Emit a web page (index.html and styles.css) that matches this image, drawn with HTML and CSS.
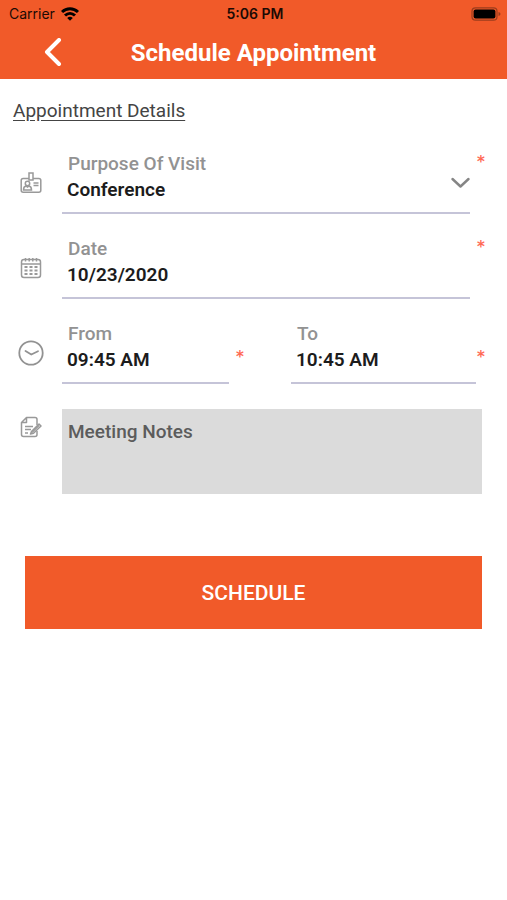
FILE: index.html
```
<!DOCTYPE html>
<html lang="en">
<head>
    <meta charset="UTF-8">
    <meta name="viewport" content="width=device-width, initial-scale=1.0">
    <title>Schedule Appointment</title>
    <link rel="stylesheet" href="styles.css">
</head>
<body>
    <header>
        <div class="status-bar">
            <div class="carrier">
                <span>Carrier</span>
                <svg width="18" height="14" viewBox="0 0 18 14" fill="none" stroke="#000" stroke-width="3">
                    <path d="M1 5C5.500 .5 12.5 .5 17 5"/>
                    <path d="M4 8.5C7 5.700 11 5.700 14 8.5"/>
                    <path d="M6.2 10.9Q9 8.5 11.8 10.9L9 13.8z" fill="#000" stroke="none"/>
                </svg>
            </div>
            <div class="time">5:06 PM</div>
            <div class="battery">
                <svg width="30" height="14" viewBox="0 0 30 14">
                    <rect x="1" y="0.8" width="25" height="12.4" rx="3.5" fill="none" stroke="#9b3d1d" stroke-width="1.2"/>
                    <rect x="2.6" y="2.5" width="21.8" height="9" rx="2" fill="#000"/>
                    <path d="M27.5 5v4q2-.6 2-2t-2-2z" fill="#9b3d1d"/>
                </svg>
            </div>
        </div>
        <div class="nav-bar">
            <button class="back" aria-label="Back">
                <svg width="18" height="30" viewBox="0 0 18 30" fill="none" stroke="#fff" stroke-width="4" stroke-linecap="round" stroke-linejoin="round">
                    <path d="M15 2L3 14l12 12"/>
                </svg>
            </button>
            <h1>Schedule Appointment</h1>
        </div>
    </header>

    <main>
        <h2>Appointment Details</h2>
        <form>
            <div class="row">
                <div class="icon">
                    <svg width="22" height="22" viewBox="0 0 22 22" fill="none" stroke="#999" stroke-width="1.5">
                        <path d="M9 6.5H3.2Q1.2 6.5 1.2 8.5v9.8q0 2 2 2h15.6q2 0 2-2V8.5q0-2-2-2H13"/>
                        <rect x="9" y="1" width="4" height="7"/>
                        <circle cx="7.5" cy="11.5" r="2.2"/>
                        <path d="M3.5 18q0-3.6 2.7-3.9l1.3 1 1.3-1q2.7.3 2.7 3.9zM13.5 11h5M13.5 13.5h5"/>
                    </svg>
                </div>
                <div class="field">
                    <label for="purpose">Purpose Of Visit</label>
                    <select id="purpose">
                        <option>Conference</option>
                    </select>
                    <svg class="chevron" width="20" height="12" viewBox="0 0 20 12" fill="none" stroke="#858585" stroke-width="2.4" stroke-linecap="round" stroke-linejoin="round">
                        <path d="M2.5 2l8 7.5 8-7.5"/>
                    </svg>
                </div>
                <span class="required">*</span>
            </div>

            <div class="row">
                <div class="icon">
                    <svg width="22" height="22" viewBox="0 0 22 22" fill="none" stroke="#999" stroke-width="1.5">
                        <rect x="1.5" y="2.5" width="19" height="18" rx="2.5"/>
                        <path d="M1.5 7h19M5.5 1v3.5M9.2 1v3.5M12.8 1v3.5M16.5 1v3.5"/>
                        <path d="M4.5 10h3M9.5 10h3M14.5 10h3M4.5 13.5h3M9.5 13.5h3M14.5 13.5h3M4.5 17h3M9.5 17h3M14.5 17h3" stroke-width="2"/>
                    </svg>
                </div>
                <div class="field">
                    <label for="date">Date</label>
                    <input type="text" id="date" value="10/23/2020">
                </div>
                <span class="required">*</span>
            </div>

            <div class="row times">
                <div class="icon">
                    <svg width="26" height="26" viewBox="0 0 26 26" fill="none" stroke="#929292" stroke-width="1.8" stroke-linecap="round" stroke-linejoin="round">
                        <circle cx="13" cy="13" r="11.7"/>
                        <path d="M7.5 11l5.8 3.5 6.7-3.3"/>
                    </svg>
                </div>
                <div class="field">
                    <label for="from">From</label>
                    <input type="text" id="from" value="09:45 AM">
                </div>
                <span class="required">*</span>
                <div class="field">
                    <label for="to">To</label>
                    <input type="text" id="to" value="10:45 AM">
                </div>
                <span class="required">*</span>
            </div>

            <div class="row notes">
                <div class="icon">
                    <svg width="22" height="22" viewBox="0 0 22 22" fill="none" stroke="#999" stroke-width="1.5" stroke-linejoin="round">
                        <path d="M17 9V3.5q0-2-2-2H6.5L1.5 6.5v12q0 2 2 2H15q2 0 2-2V15M6.5 1.5v5h-5"/>
                        <path d="M5 10.5h8M5 13.5h6M5 17h3"/>
                        <path d="M11.5 15.5L19 8l2 2-7.5 7.3-3 .7z"/>
                        <path d="M12 16.5l7-7"/>
                    </svg>
                </div>
                <textarea placeholder="Meeting Notes" aria-label="Meeting Notes"></textarea>
            </div>

            <button type="button" class="schedule">SCHEDULE</button>
        </form>
    </main>
</body>
</html>
```
FILE: styles.css
```
* {
    margin: 0;
    padding: 0;
    box-sizing: border-box;
}

body {
    background: #fff;
    font-family: Roboto, sans-serif;
}

header {
    background: #f15a29;
}

.status-bar {
    display: grid;
    grid-template-columns: 1fr auto 1fr;
    align-items: center;
    height: 27px;
    padding: 0 6px 0 9px;
    font-family: Inter, sans-serif;
    font-size: 14px;
    color: #1c0a04;
}

.carrier {
    display: flex;
    align-items: center;
    gap: 6px;
}

.time {
    font-weight: 600;
}

.battery {
    display: flex;
    justify-content: flex-end;
}

.nav-bar {
    display: grid;
    grid-template-columns: 62px 1fr 62px;
    align-items: center;
    height: 52px;
}

.back {
    display: flex;
    justify-content: flex-end;
    border: none;
    background: none;
    cursor: pointer;
}

h1 {
    font-size: 24px;
    font-weight: 700;
    text-align: center;
    color: #fff;
}

h2 {
    padding: 20px 13px 0;
    font-size: 19px;
    font-weight: 400;
    line-height: 24px;
    text-decoration: underline;
    text-underline-offset: 3px;
    color: #444;
}

form {
    padding-top: 28px;
}

.row {
    display: grid;
    grid-template-columns: 62px 1fr 37px;
    margin-bottom: 22px;
}

.times {
    grid-template-columns: 62px 167fr 62px 185fr 31px;
}

.icon {
    display: flex;
    justify-content: center;
    align-items: center;
}

.field {
    position: relative;
    display: flex;
    flex-direction: column;
    height: 63px;
    border-bottom: 2px solid #c5c4d8;
}

label {
    padding-left: 6px;
    font-size: 19px;
    font-weight: 500;
    line-height: 25px;
    color: #929292;
}

select,
input {
    width: 100%;
    height: 26px;
    padding-left: 5px;
    border: none;
    background: none;
    appearance: none;
    outline: none;
    font-family: inherit;
    font-size: 19px;
    font-weight: 600;
    color: #1c1c1c;
}

.chevron {
    position: absolute;
    right: 0;
    top: 26px;
    pointer-events: none;
}

.required {
    padding-left: 7px;
    font-family: "DejaVu Sans", sans-serif;
    font-size: 15px;
    font-weight: 700;
    line-height: 22px;
    color: #ff6a55;
}

.times .required {
    align-self: center;
    padding-top: 8px;
}

.times .required:last-child {
    padding-left: 1px;
}

.notes {
    grid-template-columns: 62px 1fr;
    margin: 25px 25px 0 0;
}

.notes .icon {
    align-items: flex-start;
    padding-top: 7px;
}

textarea {
    width: 100%;
    height: 85px;
    padding: 10px 6px;
    border: none;
    outline: none;
    resize: none;
    background: #dbdbdb;
    font-family: inherit;
    font-size: 19px;
    font-weight: 500;
    line-height: 26px;
    color: #555;
}

textarea::placeholder {
    color: #5c5c5c;
}

.schedule {
    display: block;
    width: calc(100% - 50px);
    height: 73px;
    margin: 62px 25px 0;
    border: none;
    background: #f15a29;
    font-family: inherit;
    font-size: 21px;
    font-weight: 500;
    color: #fff;
    cursor: pointer;
}
```
